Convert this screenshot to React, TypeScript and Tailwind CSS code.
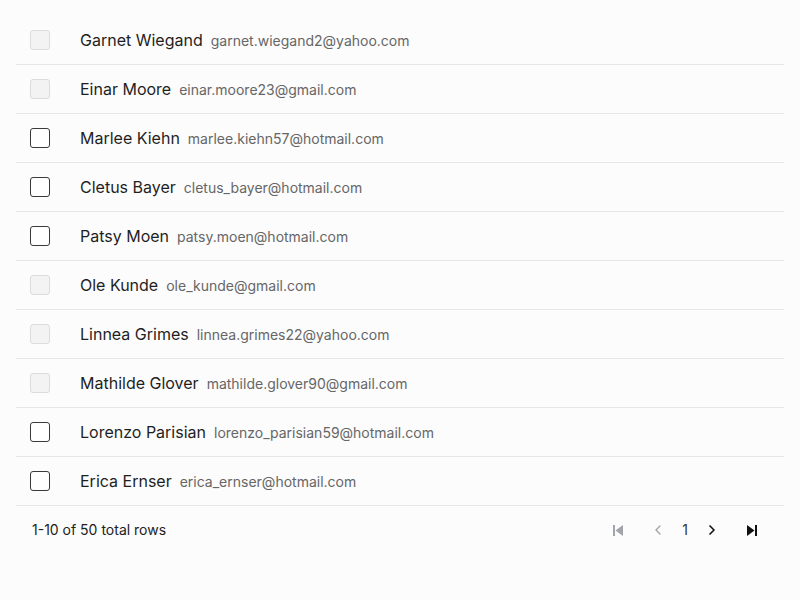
import { useState } from "react";

type Row = {
  name: string;
  email: string;
  disabled: boolean;
};

const rows: Row[] = [
  { name: "Garnet Wiegand", email: "garnet.wiegand2@yahoo.com", disabled: true },
  { name: "Einar Moore", email: "einar.moore23@gmail.com", disabled: true },
  { name: "Marlee Kiehn", email: "marlee.kiehn57@hotmail.com", disabled: false },
  { name: "Cletus Bayer", email: "cletus_bayer@hotmail.com", disabled: false },
  { name: "Patsy Moen", email: "patsy.moen@hotmail.com", disabled: false },
  { name: "Ole Kunde", email: "ole_kunde@gmail.com", disabled: true },
  { name: "Linnea Grimes", email: "linnea.grimes22@yahoo.com", disabled: true },
  { name: "Mathilde Glover", email: "mathilde.glover90@gmail.com", disabled: true },
  { name: "Lorenzo Parisian", email: "lorenzo_parisian59@hotmail.com", disabled: false },
  { name: "Erica Ernser", email: "erica_ernser@hotmail.com", disabled: false },
];

function Checkbox({ disabled }: { disabled: boolean }) {
  const [checked, setChecked] = useState(false);
  return (
    <button
      type="button"
      disabled={disabled}
      onClick={() => setChecked(!checked)}
      className={
        disabled
          ? "h-5 w-5 rounded-[3px] border border-[#dcdcdc] bg-[#f3f3f3]"
          : "h-5 w-5 rounded-[3px] border-[1.5px] border-[#3a3a3a] bg-white"
      }
    />
  );
}

function PageButton({ children, disabled }: { children: React.ReactNode; disabled?: boolean }) {
  return (
    <button
      type="button"
      disabled={disabled}
      className={`flex h-8 w-8 items-center justify-center ${disabled ? "text-[#a3a3ab]" : "text-[#111]"}`}
    >
      {children}
    </button>
  );
}

export default function App() {
  return (
    <div className="min-h-[600px] bg-[#fcfcfc] p-4 font-['Inter',sans-serif]">
      <div>
        {rows.map((row) => (
          <div key={row.name} className="flex h-[49px] items-center border-b border-[#e6e6e6]">
            <div className="flex w-12 justify-center">
              <Checkbox disabled={row.disabled} />
            </div>
            <div className="flex items-baseline gap-2 pl-4">
              <span className="text-base text-[#1f1f1f]">{row.name}</span>
              <span className="text-sm text-[#666]">{row.email}</span>
            </div>
          </div>
        ))}
      </div>
      <div className="flex h-12 items-center justify-between px-4">
        <span className="text-sm text-[#222]">1-10 of 50 total rows</span>
        <div className="flex items-center gap-2">
          <PageButton disabled>
            <svg width="10" height="11" viewBox="0 0 10 11" fill="currentColor">
              <rect x="0" y="0" width="2" height="11" />
              <path d="M10 0 L2.5 5.5 L10 11 Z" />
            </svg>
          </PageButton>
          <PageButton disabled>
            <svg width="16" height="16" viewBox="0 0 24 24" fill="none" stroke="currentColor" strokeWidth="2" strokeLinecap="round" strokeLinejoin="round">
              <path d="M15 18l-6-6 6-6" />
            </svg>
          </PageButton>
          <span className="text-sm text-[#333]">1</span>
          <PageButton>
            <svg width="16" height="16" viewBox="0 0 24 24" fill="none" stroke="currentColor" strokeWidth="2.5" strokeLinecap="round" strokeLinejoin="round">
              <path d="M9 18l6-6-6-6" />
            </svg>
          </PageButton>
          <PageButton>
            <svg width="10" height="11" viewBox="0 0 10 11" fill="currentColor">
              <path d="M0 0 L7.5 5.5 L0 11 Z" />
              <rect x="8" y="0" width="2" height="11" />
            </svg>
          </PageButton>
        </div>
      </div>
    </div>
  );
}
